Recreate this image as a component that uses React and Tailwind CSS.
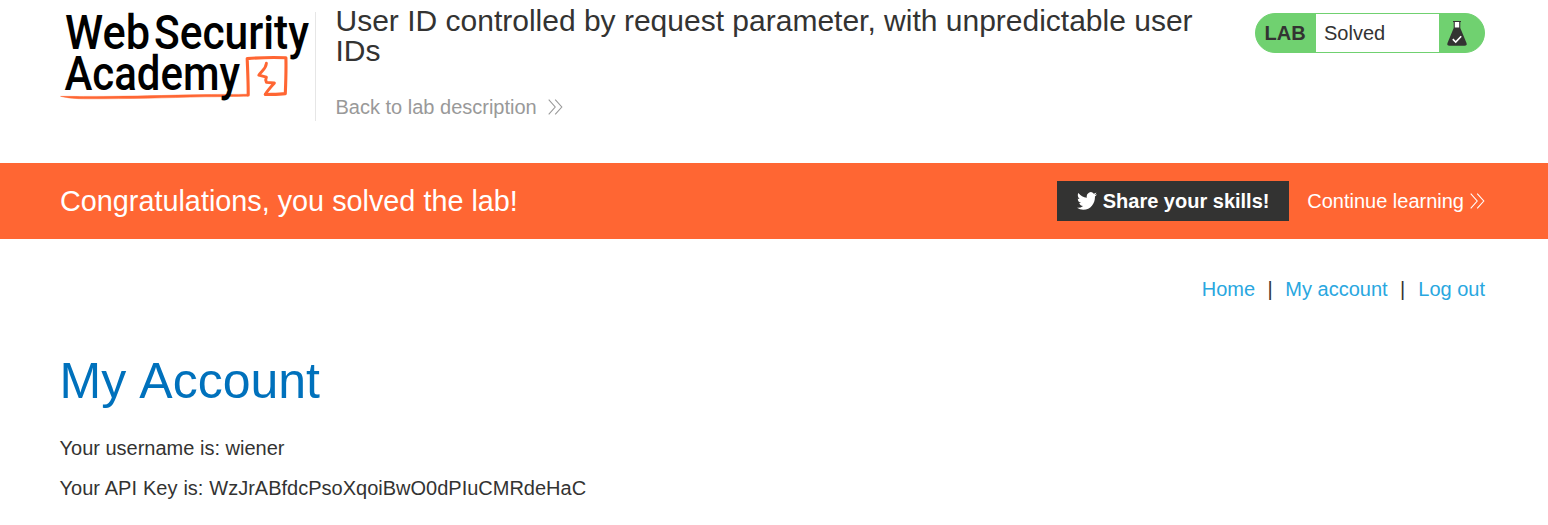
function Chevrons({ className }) {
  return (
    <svg className={className} width="15" height="16" viewBox="0 0 15 16" fill="none" stroke="currentColor" strokeWidth="1.1">
      <path d="M0.7 0.7 7.2 8 0.7 15.3M7.2 0.7 13.8 8 7.2 15.3" />
    </svg>
  );
}

function Logo() {
  return (
    <svg width="255" height="110" viewBox="60 0 255 110" className="block shrink-0 overflow-visible" role="img" aria-label="Web Security Academy">
      <g fill="none" stroke="#ff6633" strokeLinejoin="round" strokeLinecap="round">
        <path d="M61 96.4C66 96.2 76 96.6 88 96.4 130 96.6 165 95.2 205 94.6 222 94.2 236 94.6 247.6 94.2L247.8 96.2C236 96.4 222 96.8 205 96.8 165 97.8 130 98.8 88 98.8 76 98.9 68 98 61 96.4Z" fill="#ff6633" strokeWidth="0.5" />
        <path d="M248.2 95C248.3 82 247.6 70 247.2 58.6 260 57.6 274 57.2 285.9 57.8 286.2 70 285.8 82 285.3 93.6 278 94.6 271 94.2 265.3 94.5" strokeWidth="3.1" />
        <path d="M266.4 63.3C265.8 69 261.8 70.6 258.8 75.2L266.4 77.2C265.4 79 265.6 80.7 266.4 82.4L274.4 83C271.5 86.3 268 90 265.3 94.3" strokeWidth="2.9" />
      </g>
      <g className="font-['Roboto'] font-medium" fontSize="48" fill="#000">
        <text x="65" y="49" textLength="85" lengthAdjust="spacingAndGlyphs">Web</text>
        <text x="154" y="49" textLength="155" lengthAdjust="spacingAndGlyphs">Security</text>
        <text x="64.5" y="90" textLength="175.5" lengthAdjust="spacingAndGlyphs">Academy</text>
      </g>
    </svg>
  );
}

function Flask() {
  return (
    <svg width="22" height="27" viewBox="0 0 22 27" className="block">
      <path d="M7.7 1.5H14.3V8L20.5 23Q21.5 25.8 18.5 25.8H3.5Q0.5 25.8 1.5 23L7.7 8Z" fill="#333332" />
      <path d="M8.8 2H13.2V7.6H8.8Z" fill="#fff" />
      <path d="M7 1.5H15" stroke="#333332" strokeWidth="1.2" />
      <path d="M6.8 19.2 9.7 22 15.2 16.3" fill="none" stroke="#fff" strokeWidth="1.6" />
    </svg>
  );
}

function Bird() {
  return (
    <svg width="20" height="18" viewBox="0 2 24 20" fill="#fff" preserveAspectRatio="none" className="block">
      <path d="M23.953 4.57a10 10 0 01-2.825.775 4.958 4.958 0 002.163-2.723c-.951.555-2.005.959-3.127 1.184a4.92 4.92 0 00-8.384 4.482C7.69 8.095 4.067 6.13 1.64 3.162a4.822 4.822 0 00-.666 2.475c0 1.71.87 3.213 2.188 4.096a4.904 4.904 0 01-2.228-.616v.06a4.923 4.923 0 003.946 4.827 4.996 4.996 0 01-2.212.085 4.936 4.936 0 004.604 3.417 9.867 9.867 0 01-6.102 2.105c-.39 0-.779-.023-1.17-.067a13.995 13.995 0 007.557 2.209c9.053 0 13.998-7.496 13.998-13.985 0-.21 0-.42-.015-.63A9.935 9.935 0 0024 4.59z" />
    </svg>
  );
}

export default function App() {
  return (
    <div className="h-[525px] overflow-hidden bg-white font-['Liberation_Sans',Arial,sans-serif] text-[20px] leading-[24px] text-[#333332]">
      <header className="flex h-[163px] items-start pr-[63px] pl-[60px]">
        <Logo />
        <div className="mt-3 h-[109px] w-px shrink-0 bg-[#e6e6e6]" />
        <div className="ml-[19.5px] w-[870px] pt-[6px]">
          <h2 className="text-[30px] leading-[30px]">User ID controlled by request parameter, with unpredictable user IDs</h2>
          <a href="#" className="mt-[29px] flex items-center text-[#999]">
            Back to lab description
            <Chevrons className="ml-[11px]" />
          </a>
        </div>
        <div className="mt-[13px] ml-auto flex h-10 w-[230px] overflow-hidden rounded-[20px] border border-[#70d170] bg-[#70d170]">
          <span className="flex w-[60px] items-center pl-[8.5px] font-bold">LAB</span>
          <span className="flex w-[123px] items-center bg-white pl-2">Solved</span>
          <span className="flex items-center pl-[7px]"><Flask /></span>
        </div>
      </header>
      <section className="flex h-[76px] items-center bg-[#ff6633] pr-[63px] pl-[60px] text-white">
        <h4 className="text-[28.8px] leading-[34px]">Congratulations, you solved the lab!</h4>
        <button className="ml-auto flex h-10 w-[232px] items-center gap-[5.5px] bg-[#333332] pl-5 font-bold">
          <Bird />
          Share your skills!
        </button>
        <a href="#" className="ml-[18px] flex items-center gap-[6px]">
          Continue learning
          <Chevrons />
        </a>
      </section>
      <nav className="mt-[38px] flex justify-end pr-[63px] text-[#29a7df]">
        <a href="#">Home</a>
        <span className="mr-[12.5px] ml-[12.5px] text-[#333332]">|</span>
        <a href="#">My account</a>
        <span className="mr-[13px] ml-[12.5px] text-[#333332]">|</span>
        <a href="#">Log out</a>
      </nav>
      <main className="pl-[59.5px]">
        <h1 className="mt-[50px] text-[50px] leading-[60px] [word-spacing:2px] text-[#0071bc]">My Account</h1>
        <p className="mt-[25px]">Your username is: wiener</p>
        <p className="mt-4 [word-spacing:0.4px]">Your API Key is: WzJrABfdcPsoXqoiBwO0dPIuCMRdeHaC</p>
      </main>
    </div>
  );
}
